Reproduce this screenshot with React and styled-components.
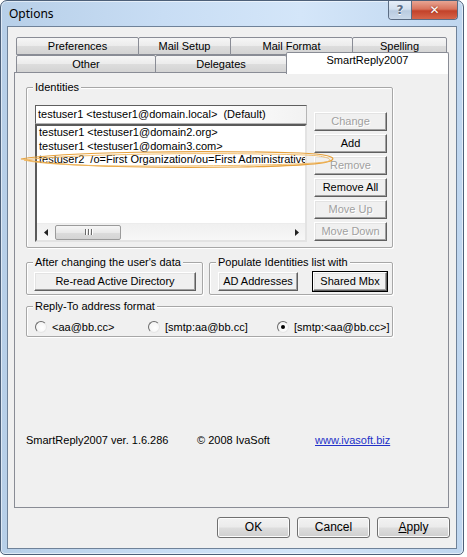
import React from "react";
import styled, { createGlobalStyle } from "styled-components";

const GlobalStyle = createGlobalStyle`
  html, body { margin: 0; padding: 0; background: #fff; }
  body {
    font-family: "Liberation Sans", Arial, sans-serif;
    font-size: 11px;
    color: #000;
  }
`;

const Frame = styled.div`
  position: relative;
  width: 464px;
  height: 555px;
  box-sizing: border-box;
  border: 1px solid #4d6079;
  border-radius: 7px 7px 5px 5px;
  background: linear-gradient(90deg, #b7cfe8 0%, #c8ddf4 35%, #d4e6f9 65%, #bfd6ef 100%);
  box-shadow: inset 0 0 0 1px rgba(255, 255, 255, 0.55);
  display: flex;
  flex-direction: column;
  padding: 0 6px 5px;
`;

const TitleBar = styled.div`
  height: 25px;
  display: flex;
  align-items: flex-start;
`;

const Title = styled.span`
  font-family: "Noto Sans", "Open Sans", sans-serif;
  font-size: 12px;
  line-height: 25px;
  padding-left: 2px;
  color: #000;
`;

const Captions = styled.div`
  margin-left: auto;
  margin-right: -1px;
  display: flex;
  border: 1px solid #5b6c83;
  border-top: none;
  border-radius: 0 0 4px 4px;
  overflow: hidden;
`;

const CaptionButton = styled.div`
  width: ${(p) => p.$w}px;
  height: 18px;
  display: flex;
  align-items: center;
  justify-content: center;
  font-family: "DejaVu Sans", sans-serif;
  font-weight: bold;
  font-size: 12px;
  color: ${(p) => (p.$close ? "#fff" : "#5a6d86")};
  background: ${(p) =>
    p.$close
      ? "linear-gradient(#e8a593 0%, #d8735c 45%, #c3422a 55%, #d6654a 100%)"
      : "linear-gradient(#e6eef8 0%, #d2dfee 45%, #b9cbe0 55%, #cad9ea 100%)"};
  border-left: ${(p) => (p.$close ? "1px solid #5b6c83" : "none")};
  text-shadow: ${(p) => (p.$close ? "0 0 2px #7a2010" : "0 1px 0 #fff")};
`;

const Client = styled.div`
  flex: 1;
  background: #f0f0f0;
  border: 1px solid #6f8299;
  display: flex;
  flex-direction: column;
  padding-top: 10px;
`;

const TabRow = styled.div`
  display: flex;
  height: 18px;
  margin-left: 8px;
  align-items: flex-start;
`;

const Tab = styled.div`
  position: relative;
  box-sizing: border-box;
  width: ${(p) => p.$w}px;
  height: ${(p) => (p.$active ? 22 : 18)}px;
  margin-top: ${(p) => (p.$active ? -3 : 0)}px;
  margin-left: -1px;
  z-index: ${(p) => (p.$active ? 2 : 0)};
  border: 1px solid #898c95;
  border-bottom: ${(p) => (p.$active ? "none" : "1px solid #898c95")};
  border-radius: 2px 2px 0 0;
  background: ${(p) =>
    p.$active ? "#fff" : "linear-gradient(#f6f6f6 0%, #ebebeb 50%, #dddddd 51%, #d3d3d3 100%)"};
  text-align: center;
  line-height: ${(p) => (p.$active ? 15 : 16)}px;
  &:first-child { margin-left: 0; }
`;

const Panel = styled.div`
  box-sizing: border-box;
  margin-left: 6px;
  margin-top: -1px;
  width: 435px;
  height: 436px;
  border: 1px solid #898c95;
  background: #f0f0f0;
  padding: 14px 0 0 11px;
  display: flex;
  flex-direction: column;
`;

const Group = styled.div`
  position: relative;
  box-sizing: border-box;
  width: ${(p) => p.$w}px;
  height: ${(p) => p.$h}px;
  border: 1px solid #a7a7a7;
  box-shadow: inset 1px 1px 0 #fff, 1px 1px 0 #fff;
  border-radius: 2px;
  padding: ${(p) => p.$pad};
  display: flex;
`;

const Legend = styled.span`
  position: absolute;
  top: -8px;
  left: 6px;
  padding: 0 2px;
  background: #f0f0f0;
  line-height: 14px;
`;

const ListColumn = styled.div`
  width: 272px;
  display: flex;
  flex-direction: column;
`;

const DefaultBox = styled.div`
  box-sizing: border-box;
  height: 19px;
  border: 1px solid #7a7a7a;
  border-color: #5e5e5e #b5b5b5 #b5b5b5 #5e5e5e;
  background: linear-gradient(90deg, #fff 0%, #fff 60%, #f2f2f2 100%);
  padding-left: 2px;
  line-height: 17px;
  white-space: pre;
`;

const ListBox = styled.div`
  box-sizing: border-box;
  height: 118px;
  border: 2px solid;
  border-color: #5a5a5a #e3e3e3 #e3e3e3 #5a5a5a;
  background: #fff;
  display: flex;
  flex-direction: column;
  overflow: hidden;
`;

const Items = styled.div`
  flex: 1;
  padding: 0 0 0 2px;
  white-space: pre;
  overflow: hidden;
`;

const Item = styled.div`
  line-height: 13.5px;
`;

const HScroll = styled.div`
  height: 16px;
  display: flex;
  align-items: center;
  background: linear-gradient(#f0f0f0, #f7f7f7);
  border-top: 1px solid #ececec;
`;

const ScrollArrow = styled.div`
  width: 17px;
  height: 16px;
  display: flex;
  align-items: center;
  justify-content: center;
`;

const ScrollTrack = styled.div`
  flex: 1;
  height: 16px;
  display: flex;
  align-items: center;
`;

const Thumb = styled.div`
  box-sizing: border-box;
  width: 66px;
  height: 15px;
  margin-left: 1px;
  border: 1px solid #9b9b9b;
  border-radius: 2px;
  background: linear-gradient(#f6f6f6 0%, #e9e9e9 50%, #dcdcdc 51%, #d4d4d4 100%);
  display: flex;
  align-items: center;
  justify-content: center;
  gap: 2px;
`;

const Grip = styled.span`
  width: 1px;
  height: 6px;
  background: #6a6a6a;
  box-shadow: 1px 0 0 #fff;
`;

const ButtonColumn = styled.div`
  margin-top: 7px;
  margin-left: 7px;
  display: flex;
  flex-direction: column;
  gap: 3px;
`;

const ClassicButton = styled.div`
  box-sizing: border-box;
  width: ${(p) => p.$w}px;
  height: 19px;
  margin-left: ${(p) => p.$gap || 0}px;
  background: #f0f0f0;
  border: 1px solid;
  border-color: #fff #5f5f5f #5f5f5f #fff;
  box-shadow: inset -1px -1px 0 #a0a0a0, inset 1px 1px 0 #e3e3e3
    ${(p) => (p.$default ? ", 0 0 0 1px #000" : "")};
  text-align: center;
  line-height: 17px;
  color: ${(p) => (p.$disabled ? "#a0a0a0" : "#000")};
  text-shadow: ${(p) => (p.$disabled ? "1px 1px 0 #fff" : "none")};
  white-space: nowrap;
`;

const GroupRow = styled.div`
  display: flex;
  gap: 6px;
  margin-top: ${(p) => p.$top}px;
`;

const RadioRow = styled.div`
  display: flex;
  align-items: center;
`;

const RadioItem = styled.div`
  width: ${(p) => (p.$w ? `${p.$w}px` : "auto")};
  display: flex;
  align-items: center;
  gap: 5px;
`;

const RadioCircle = styled.span`
  box-sizing: border-box;
  width: 12px;
  height: 12px;
  border-radius: 50%;
  border: 1px solid;
  border-color: #6b6b6b #e6e6e6 #e6e6e6 #6b6b6b;
  background: radial-gradient(circle at 60% 60%, #fff 0%, #f4f4f4 70%, #dcdcdc 100%);
  display: flex;
  align-items: center;
  justify-content: center;
  &::after {
    content: "";
    width: 4px;
    height: 4px;
    border-radius: 50%;
    background: ${(p) => (p.$on ? "#000" : "transparent")};
  }
`;

const Footer = styled.div`
  display: flex;
  margin-top: 96px;
  line-height: 14px;
`;

const FooterCell = styled.span`
  width: ${(p) => (p.$w ? `${p.$w}px` : "auto")};
  white-space: nowrap;
`;

const Link = styled.span`
  color: #2232c8;
  text-decoration: underline;
`;

const DialogButtons = styled.div`
  display: flex;
  justify-content: flex-end;
  gap: 7px;
  margin: 9px 6px 0 0;
`;

const VistaButton = styled.div`
  box-sizing: border-box;
  width: 73px;
  height: 21px;
  border: 1px solid #707070;
  border-radius: 3px;
  background: linear-gradient(#f2f2f2 0%, #ebebeb 48%, #dddddd 52%, #cfcfcf 100%);
  box-shadow: inset 0 0 0 1px #fcfcfc;
  text-align: center;
  line-height: 19px;
  font-size: 12px;
`;

const Annotation = styled.svg`
  position: absolute;
  left: -1px;
  top: -1px;
  pointer-events: none;
`;

const rowOne = [
  { label: "Preferences", w: 123 },
  { label: "Mail Setup", w: 93 },
  { label: "Mail Format", w: 123 },
  { label: "Spelling", w: 95 },
];

const rowTwo = [
  { label: "Other", w: 140 },
  { label: "Delegates", w: 132 },
  { label: "SmartReply2007", w: 163, active: true },
];

const sideButtons = [
  { label: "Change", disabled: true },
  { label: "Add" },
  { label: "Remove", disabled: true },
  { label: "Remove All" },
  { label: "Move Up", disabled: true },
  { label: "Move Down", disabled: true },
];

const identities = [
  "testuser1 <testuser1@domain2.org>",
  "testuser1 <testuser1@domain3.com>",
  "testuser2  /o=First Organization/ou=First Administrative Group",
];

const App = () => {
  return (
    <>
      <GlobalStyle />
      <Frame>
        <TitleBar>
          <Title>Options</Title>
          <Captions>
            <CaptionButton $w={22}>?</CaptionButton>
            <CaptionButton $w={45} $close>
              ✕
            </CaptionButton>
          </Captions>
        </TitleBar>

        <Client>
          <TabRow>
            {rowOne.map((t) => (
              <Tab key={t.label} $w={t.w}>
                {t.label}
              </Tab>
            ))}
          </TabRow>
          <TabRow>
            {rowTwo.map((t) => (
              <Tab key={t.label} $w={t.w} $active={t.active}>
                {t.label}
              </Tab>
            ))}
          </TabRow>

          <Panel>
            <Group $w={367} $h={161} $pad="17px 0 0 8px">
              <Legend>Identities</Legend>
              <ListColumn>
                <DefaultBox>{"testuser1 <testuser1@domain.local>  (Default)"}</DefaultBox>
                <ListBox>
                  <Items>
                    {identities.map((i) => (
                      <Item key={i}>{i}</Item>
                    ))}
                  </Items>
                  <HScroll>
                    <ScrollArrow>
                      <svg width="4" height="7" viewBox="0 0 4 7">
                        <path d="M4 0 L0 3.5 L4 7 Z" fill="#222" />
                      </svg>
                    </ScrollArrow>
                    <ScrollTrack>
                      <Thumb>
                        <Grip />
                        <Grip />
                        <Grip />
                      </Thumb>
                    </ScrollTrack>
                    <ScrollArrow>
                      <svg width="4" height="7" viewBox="0 0 4 7">
                        <path d="M0 0 L4 3.5 L0 7 Z" fill="#222" />
                      </svg>
                    </ScrollArrow>
                  </HScroll>
                </ListBox>
              </ListColumn>
              <ButtonColumn>
                {sideButtons.map((b) => (
                  <ClassicButton key={b.label} $w={73} $disabled={b.disabled}>
                    {b.label}
                  </ClassicButton>
                ))}
              </ButtonColumn>
            </Group>

            <GroupRow $top={14}>
              <Group $w={177} $h={33} $pad="9px 0 0 7px">
                <Legend>After changing the user's data</Legend>
                <ClassicButton $w={162}>Re-read Active Directory</ClassicButton>
              </Group>
              <Group $w={184} $h={33} $pad="9px 0 0 8px">
                <Legend>Populate Identities list with</Legend>
                <ClassicButton $w={80}>AD Addresses</ClassicButton>
                <ClassicButton $w={74} $gap={15} $default>
                  Shared Mbx
                </ClassicButton>
              </Group>
            </GroupRow>

            <GroupRow $top={11}>
              <Group $w={367} $h={31} $pad="10px 0 0 8px">
                <Legend>Reply-To address format</Legend>
                <RadioRow>
                  <RadioItem $w={113}>
                    <RadioCircle />
                    &lt;aa@bb.cc&gt;
                  </RadioItem>
                  <RadioItem $w={129}>
                    <RadioCircle />
                    [smtp:aa@bb.cc]
                  </RadioItem>
                  <RadioItem>
                    <RadioCircle $on />
                    [smtp:&lt;aa@bb.cc&gt;]
                  </RadioItem>
                </RadioRow>
              </Group>
            </GroupRow>

            <Footer>
              <FooterCell $w={171}>SmartReply2007 ver. 1.6.286</FooterCell>
              <FooterCell $w={118}>© 2008 IvaSoft</FooterCell>
              <FooterCell>
                <Link>www.ivasoft.biz</Link>
              </FooterCell>
            </Footer>
          </Panel>

          <DialogButtons>
            <VistaButton>OK</VistaButton>
            <VistaButton>Cancel</VistaButton>
            <VistaButton>
              <u>A</u>pply
            </VistaButton>
          </DialogButtons>
        </Client>

        <Annotation width="464" height="555" viewBox="0 0 464 555">
          <path
            d="M21 159 C 60 152, 200 150, 300 153 C 326 154, 336 157, 332 160 C 328 164, 300 166, 240 167 C 150 168, 60 167, 21 159 Z"
            fill="none"
            stroke="#e6a23e"
            strokeWidth="1.2"
          />
          <path
            d="M24 160 C 70 154, 210 152, 305 155 C 330 156, 334 160, 326 162 C 300 165, 220 166, 140 166 C 80 166, 40 164, 24 160"
            fill="none"
            stroke="#f0b860"
            strokeWidth="0.9"
          />
        </Annotation>
      </Frame>
    </>
  );
};

export default App;
